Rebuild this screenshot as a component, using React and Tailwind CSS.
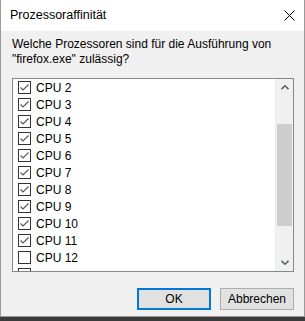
import React from "react";

const FONT = { fontFamily: '"Liberation Sans", Arial, sans-serif' };

// last row is cut off by the list box; only its checkbox top shows
const cpus = [
  { n: 2, on: true },
  { n: 3, on: true },
  { n: 4, on: true },
  { n: 5, on: true },
  { n: 6, on: true },
  { n: 7, on: true },
  { n: 8, on: true },
  { n: 9, on: true },
  { n: 10, on: true },
  { n: 11, on: true },
  { n: 12, on: false },
  { n: 13, on: false, hidden: true },
];

const Check = ({ on }) => (
  <span className="flex h-[13px] w-[13px] shrink-0 items-center justify-center border border-[#333333] bg-white">
    {on && (
      <svg width="11" height="11" viewBox="0 0 11 11" fill="none" stroke="#555555" strokeWidth="1.1">
        <path d="M1.5 5.5 L4 8 L9.5 2.5" />
      </svg>
    )}
  </span>
);

const Chevron = ({ down }) => (
  <svg width="8" height="5" viewBox="0 0 8 5" fill="none" stroke="#606060" strokeWidth="1.6">
    <path d={down ? "M0.5 0.8 L4 4.2 L7.5 0.8" : "M0.5 4.2 L4 0.8 L7.5 4.2"} />
  </svg>
);

export default function App() {
  return (
    <div className="flex h-[321px] w-[305px] flex-col bg-[#3a3a3a] text-[12px] text-black" style={FONT}>
      <div className="flex h-[317px] flex-col border-x border-b border-[#9a9a9a] bg-[#f0f0f0]">
        {/* title bar */}
        <div className="flex h-[31px] shrink-0 items-center justify-between bg-white pl-[9px] pr-[9px]">
          <span className="text-[12.5px]">Prozessoraffinität</span>
          <svg width="11" height="11" viewBox="0 0 11 11" stroke="#000" strokeWidth="1">
            <path d="M0.5 0.5 L10.5 10.5 M10.5 0.5 L0.5 10.5" />
          </svg>
        </div>

        <div className="flex flex-1 flex-col pl-[11px] pr-[10px]">
          <p className="mt-[6px] leading-[15px]">
            Welche Prozessoren sind für die Ausführung von
            <br />
            "firefox.exe" zulässig?
          </p>

          {/* list box */}
          <div className="mt-[11px] flex h-[194px] border border-[#828790] bg-white">
            <div className="flex-1 overflow-hidden">
              {cpus.map((c) => (
                <div key={c.n} className="flex h-[17px] shrink-0 items-center gap-[5px] pl-[5px]">
                  <Check on={c.on} />
                  {!c.hidden && <span>CPU {c.n}</span>}
                </div>
              ))}
            </div>
            <div className="flex w-[18px] flex-col border-l border-[#e3ebf5] bg-[#f0f0f0]">
              <div className="flex h-[17px] items-center justify-center">
                <Chevron />
              </div>
              <div className="flex flex-1 flex-col">
                <div className="h-[28px]" />
                <div className="mx-[1px] h-[102px] bg-[#cdcdcd]" />
              </div>
              <div className="flex h-[17px] items-center justify-center">
                <Chevron down />
              </div>
            </div>
          </div>

          {/* buttons */}
          <div className="mt-[16px] flex justify-end gap-[9px]">
            <button className="flex h-[22px] w-[74px] items-center justify-center border-2 border-[#0078d7] bg-[#e1e1e1]">
              OK
            </button>
            <button className="flex h-[22px] w-[74px] items-center justify-center border border-[#adadad] bg-[#e1e1e1]">
              Abbrechen
            </button>
          </div>
        </div>
      </div>
    </div>
  );
}
